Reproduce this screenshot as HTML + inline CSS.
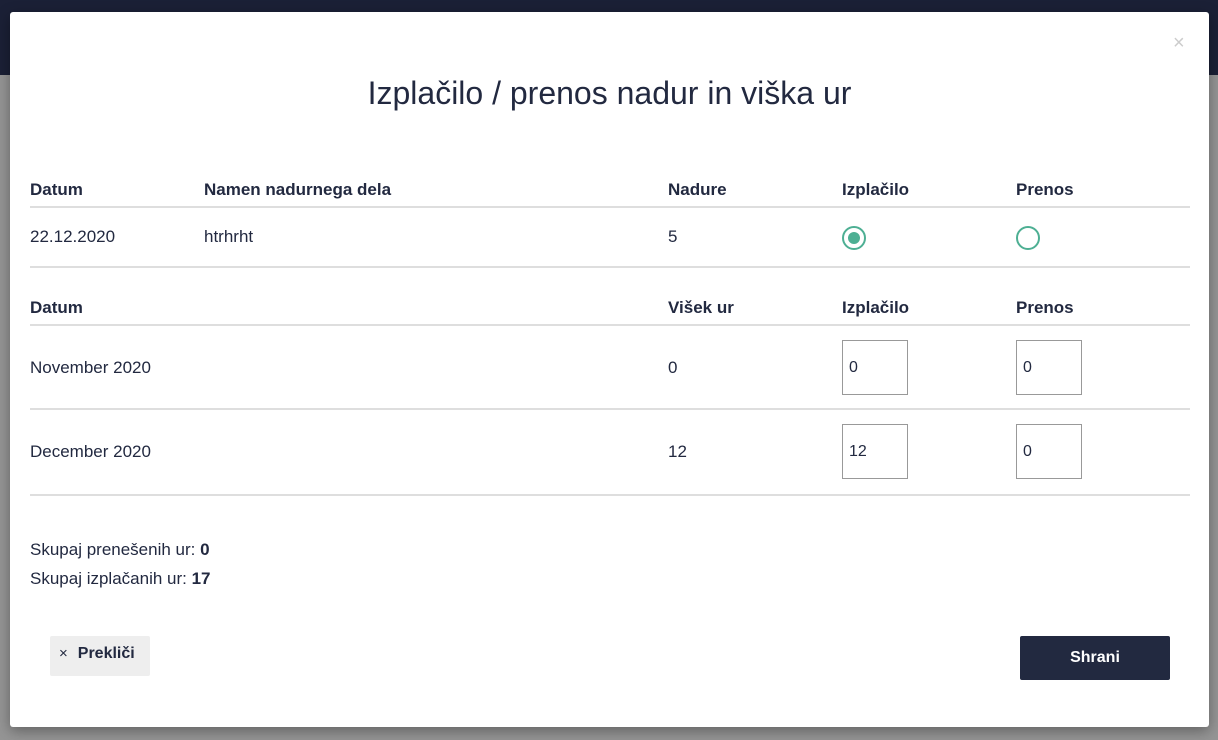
<!DOCTYPE html>
<html><head><meta charset="utf-8"><style>
body{margin:0;width:1218px;height:740px;overflow:hidden;font-family:"Liberation Sans",sans-serif;color:#222940;background:#959595;position:relative}
.top{position:absolute;left:0;top:0;width:1218px;height:75px;background:#1b2036}
.modal{position:absolute;left:10px;top:12px;width:1199px;height:715px;background:#fff;border-radius:3px;box-shadow:0 4px 14px rgba(0,0,0,.35)}
.t{position:absolute;font-size:17px;white-space:nowrap}
.b{font-weight:bold}
.line{position:absolute;left:20px;width:1160px;height:2px;background:#dedede}
.inp{position:absolute;width:66px;height:55px;border:1px solid #999;box-sizing:border-box;font-size:16px;line-height:53px;padding-left:6px}
.rad{position:absolute;width:24px;height:24px;border:2px solid #4daf93;border-radius:50%;box-sizing:border-box}
</style></head><body>
<div class="top"></div>
<div class="modal">
<div class="t" style="left:1163px;top:20px;color:#ccc;font-size:20px">×</div>
<div class="t" style="left:0;width:1199px;text-align:center;top:63px;font-size:32px">Izplačilo / prenos nadur in viška ur</div>
<div class="t b" style="left:20px;top:168px">Datum</div>
<div class="t b" style="left:194px;top:168px">Namen nadurnega dela</div>
<div class="t b" style="left:658px;top:168px">Nadure</div>
<div class="t b" style="left:832px;top:168px">Izplačilo</div>
<div class="t b" style="left:1006px;top:168px">Prenos</div>
<div class="line" style="top:194px"></div>
<div class="t" style="left:20px;top:215px">22.12.2020</div>
<div class="t" style="left:194px;top:215px">htrhrht</div>
<div class="t" style="left:658px;top:215px">5</div>
<div class="rad" style="left:832px;top:214px"><div style="position:absolute;left:4px;top:4px;width:12px;height:12px;border-radius:50%;background:#4daf93"></div></div>
<div class="rad" style="left:1006px;top:214px"></div>
<div class="line" style="top:254px"></div>
<div class="t b" style="left:20px;top:286px">Datum</div>
<div class="t b" style="left:658px;top:286px">Višek ur</div>
<div class="t b" style="left:832px;top:286px">Izplačilo</div>
<div class="t b" style="left:1006px;top:286px">Prenos</div>
<div class="line" style="top:312px"></div>
<div class="t" style="left:20px;top:346px">November 2020</div>
<div class="t" style="left:658px;top:346px">0</div>
<div class="inp" style="left:832px;top:328px">0</div>
<div class="inp" style="left:1006px;top:328px">0</div>
<div class="line" style="top:396px"></div>
<div class="t" style="left:20px;top:430px">December 2020</div>
<div class="t" style="left:658px;top:430px">12</div>
<div class="inp" style="left:832px;top:412px">12</div>
<div class="inp" style="left:1006px;top:412px">0</div>
<div class="line" style="top:482px"></div>
<div class="t" style="left:20px;top:528px">Skupaj prenešenih ur: <b>0</b></div>
<div class="t" style="left:20px;top:557px">Skupaj izplačanih ur: <b>17</b></div>
<div style="position:absolute;left:40px;top:624px;width:100px;height:40px;background:#eee;border-radius:2px;font-size:16px;line-height:36px"><span style="margin-left:9px;font-size:15px">×</span><b style="margin-left:10px">Prekliči</b></div>
<div style="position:absolute;left:1010px;top:624px;width:150px;height:44px;background:#222940;color:#fff;border-radius:2px;font-size:16px;font-weight:bold;text-align:center;line-height:44px">Shrani</div>
</div>
</body></html>
